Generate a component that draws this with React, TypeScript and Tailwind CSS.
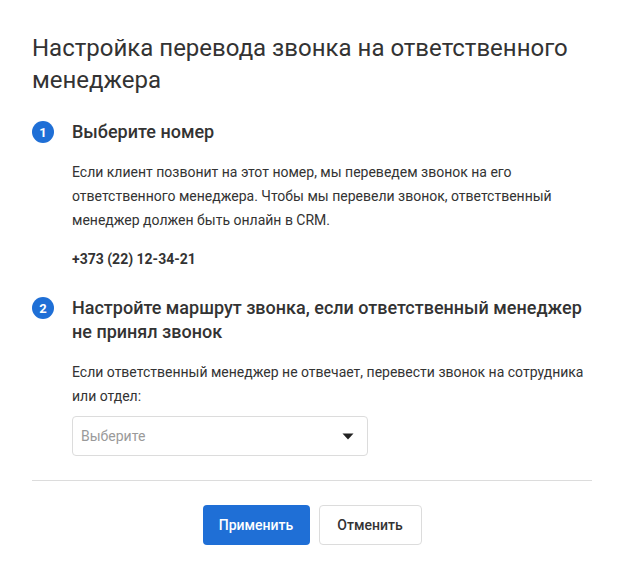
import React from "react";

function Step({ n, title, children }: { n: number; title: React.ReactNode; children: React.ReactNode }) {
  return (
    <div className="flex">
      <div className="w-[22px] h-6 flex items-center shrink-0">
        <div className="w-[22px] h-[22px] rounded-full bg-[#1f6fd6] text-white text-[13px] font-bold flex items-center justify-center leading-none">
          {n}
        </div>
      </div>
      <div className="ml-[18px] flex-1">
        <div className="text-[18px] leading-6 font-medium text-[#333]">{title}</div>
        {children}
      </div>
    </div>
  );
}

export default function App() {
  return (
    <div
      className="w-[624px] h-[577px] bg-white px-8 pt-8"
      style={{ fontFamily: "Roboto, 'Liberation Sans', sans-serif" }}
    >
      <h1 className="text-[24px] leading-8 font-normal text-[#333]">
        Настройка перевода звонка на ответственного менеджера
      </h1>
      <div className="mt-6">
        <Step n={1} title="Выберите номер">
          <p className="mt-4 text-[14px] leading-6 text-[#333]">
            Если клиент позвонит на этот номер, мы переведем звонок на его
            <br />
            ответственного менеджера. Чтобы мы перевели звонок, ответственный менеджер должен быть онлайн в CRM.
          </p>
          <p className="mt-[15px] text-[14px] leading-6 font-bold text-[#333]">+373 (22) 12-34-21</p>
        </Step>
      </div>
      <div className="mt-[25px]">
        <Step n={2} title="Настройте маршрут звонка, если ответственный менеджер не принял звонок">
          <p className="mt-4 text-[14px] leading-6 text-[#333]">
            Если ответственный менеджер не отвечает, перевести звонок на сотрудника или отдел:
          </p>
          <div className="mt-2 w-[296px] h-10 border border-[#dcdcdc] rounded-[4px] flex items-center justify-between pl-2 pr-[13px]">
            <span className="text-[14px] text-[#9a9a9a]">Выберите</span>
            <svg width="12" height="7" viewBox="0 0 12 7">
              <path d="M0.5 0.5 L11.5 0.5 L6 6.5 Z" fill="#222" />
            </svg>
          </div>
        </Step>
      </div>
      <div className="mt-6 border-t border-[#dcdcdc]" />
      <div className="mt-6 flex justify-center gap-[9px]">
        <button className="w-[107px] h-10 rounded-[4px] bg-[#1f6fd6] text-white text-[14px] font-medium">
          Применить
        </button>
        <button className="w-[103px] h-10 rounded-[4px] bg-white border border-[#dcdcdc] text-[#333] text-[14px] font-medium">
          Отменить
        </button>
      </div>
    </div>
  );
}
